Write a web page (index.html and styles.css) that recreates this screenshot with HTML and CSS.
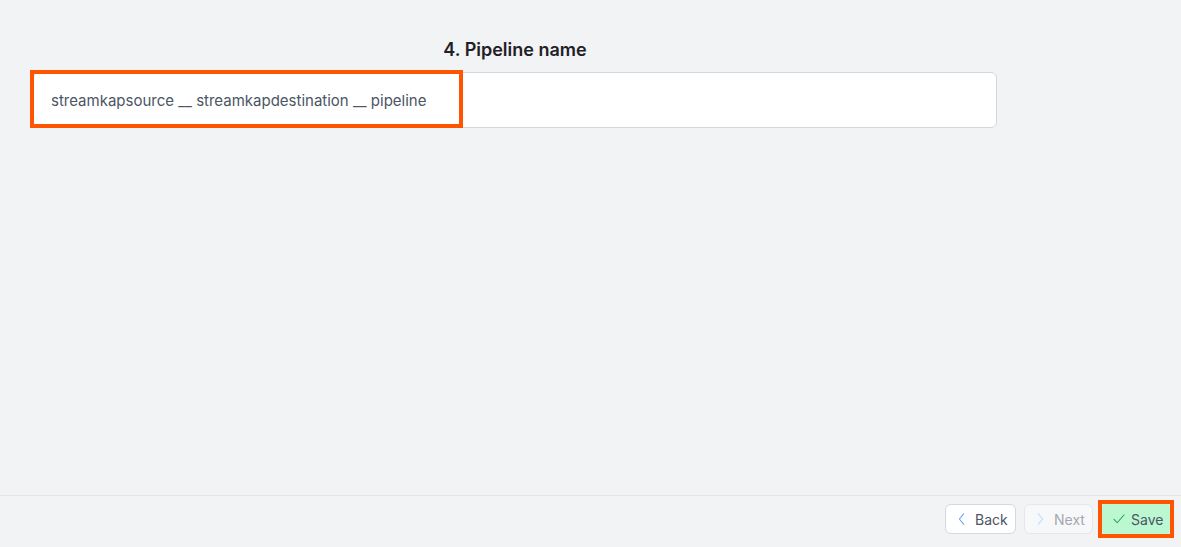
FILE: index.html
```html
<!DOCTYPE html>
<html lang="en">
<head>
<meta charset="utf-8">
<title>Pipeline name</title>
<link rel="stylesheet" href="styles.css">
</head>
<body>
<div class="page">
  <main class="main">
    <section class="step">
      <h2 class="step-title">4. Pipeline name</h2>
      <div class="field">
        <input class="text-input" type="text" value="streamkapsource __ streamkapdestination __ pipeline">
        <div class="highlight highlight-input"></div>
      </div>
    </section>
  </main>
  <footer class="footer">
    <button class="btn btn-back" type="button">
      <svg class="chev" viewBox="0 0 8 14"><path d="M6.5 1 1.5 7l5 6" fill="none" stroke="currentColor" stroke-width="1.3" stroke-linecap="round" stroke-linejoin="round"/></svg>
      <span>Back</span>
    </button>
    <button class="btn btn-next" type="button" disabled>
      <svg class="chev" viewBox="0 0 8 14"><path d="M1.5 1l5 6-5 6" fill="none" stroke="currentColor" stroke-width="1.3" stroke-linecap="round" stroke-linejoin="round"/></svg>
      <span>Next</span>
    </button>
    <div class="save-wrap">
      <button class="btn btn-save" type="button">
        <svg class="check" viewBox="0 0 14 12"><path d="M1 6.5 4.8 10.5 13 1.2" fill="none" stroke="currentColor" stroke-width="1.3" stroke-linecap="round" stroke-linejoin="round"/></svg>
        <span>Save</span>
      </button>
      <div class="highlight highlight-save"></div>
    </div>
  </footer>
</div>
</body>
</html>
```

FILE: styles.css
```css
* { box-sizing: border-box; }
html, body { margin: 0; padding: 0; }
body {
  background: #f2f3f5;
  font-family: Inter, "Noto Sans", "Liberation Sans", sans-serif;
  color: #1f2937;
}
.page {
  width: 1181px;
  height: 547px;
  display: flex;
  flex-direction: column;
}
.main {
  height: 495px;
  padding: 38px 0 0 33px;
}
.step {
  width: 964px;
  display: flex;
  flex-direction: column;
  align-items: center;
}
.step-title {
  margin: 0;
  font-size: 18px;
  line-height: 24px;
  font-weight: 600;
  color: #1f2126;
}
.field {
  position: relative;
  width: 100%;
  margin-top: 10px;
}
.text-input {
  display: block;
  width: 100%;
  height: 56px;
  padding: 0 17px;
  border: 1px solid #d4d6db;
  border-radius: 6px;
  background: #fff;
  font-family: inherit;
  font-size: 15px;
  color: #4b5563;
  outline: none;
}
.highlight {
  position: absolute;
  border: 4px solid #ff5500;
  pointer-events: none;
}
.highlight-input {
  left: -3px;
  top: -2px;
  width: 433px;
  height: 58px;
}
.footer {
  flex: 1;
  border-top: 1px solid #e3e4e8;
  display: flex;
  justify-content: flex-end;
  align-items: flex-start;
  gap: 8px;
  padding: 8px 11px 0 0;
}
.btn {
  height: 30px;
  display: inline-flex;
  align-items: center;
  gap: 10px;
  padding: 0 8px 0 12px;
  border-radius: 6px;
  border: 1px solid #d6d8dd;
  background: #fff;
  font-family: inherit;
  font-size: 14px;
  color: #4b5563;
  cursor: pointer;
}
.chev {
  flex: none;
  width: 7px;
  height: 12px;
}
.check {
  flex: none;
  width: 12px;
  height: 10px;
}
.btn-back { width: 71px; }
.btn-back .chev { color: #60a5fa; }
.btn-next {
  width: 69px;
  background: #f7f8f9;
  border-color: #e5e7eb;
  color: #a3a8b0;
}
.btn-next .chev { color: #bfdbfe; }
.save-wrap {
  position: relative;
  margin-left: 1px;
}
.btn-save {
  width: 68px;
  background: #bbf7d0;
  border-color: #bbf7d0;
  gap: 6px;
  padding: 0 6px 0 10px;
  border-radius: 2px;
}
.btn-save .check { color: #22a559; }
.highlight-save {
  left: -4px;
  top: -4px;
  width: 76px;
  height: 38px;
}
```
